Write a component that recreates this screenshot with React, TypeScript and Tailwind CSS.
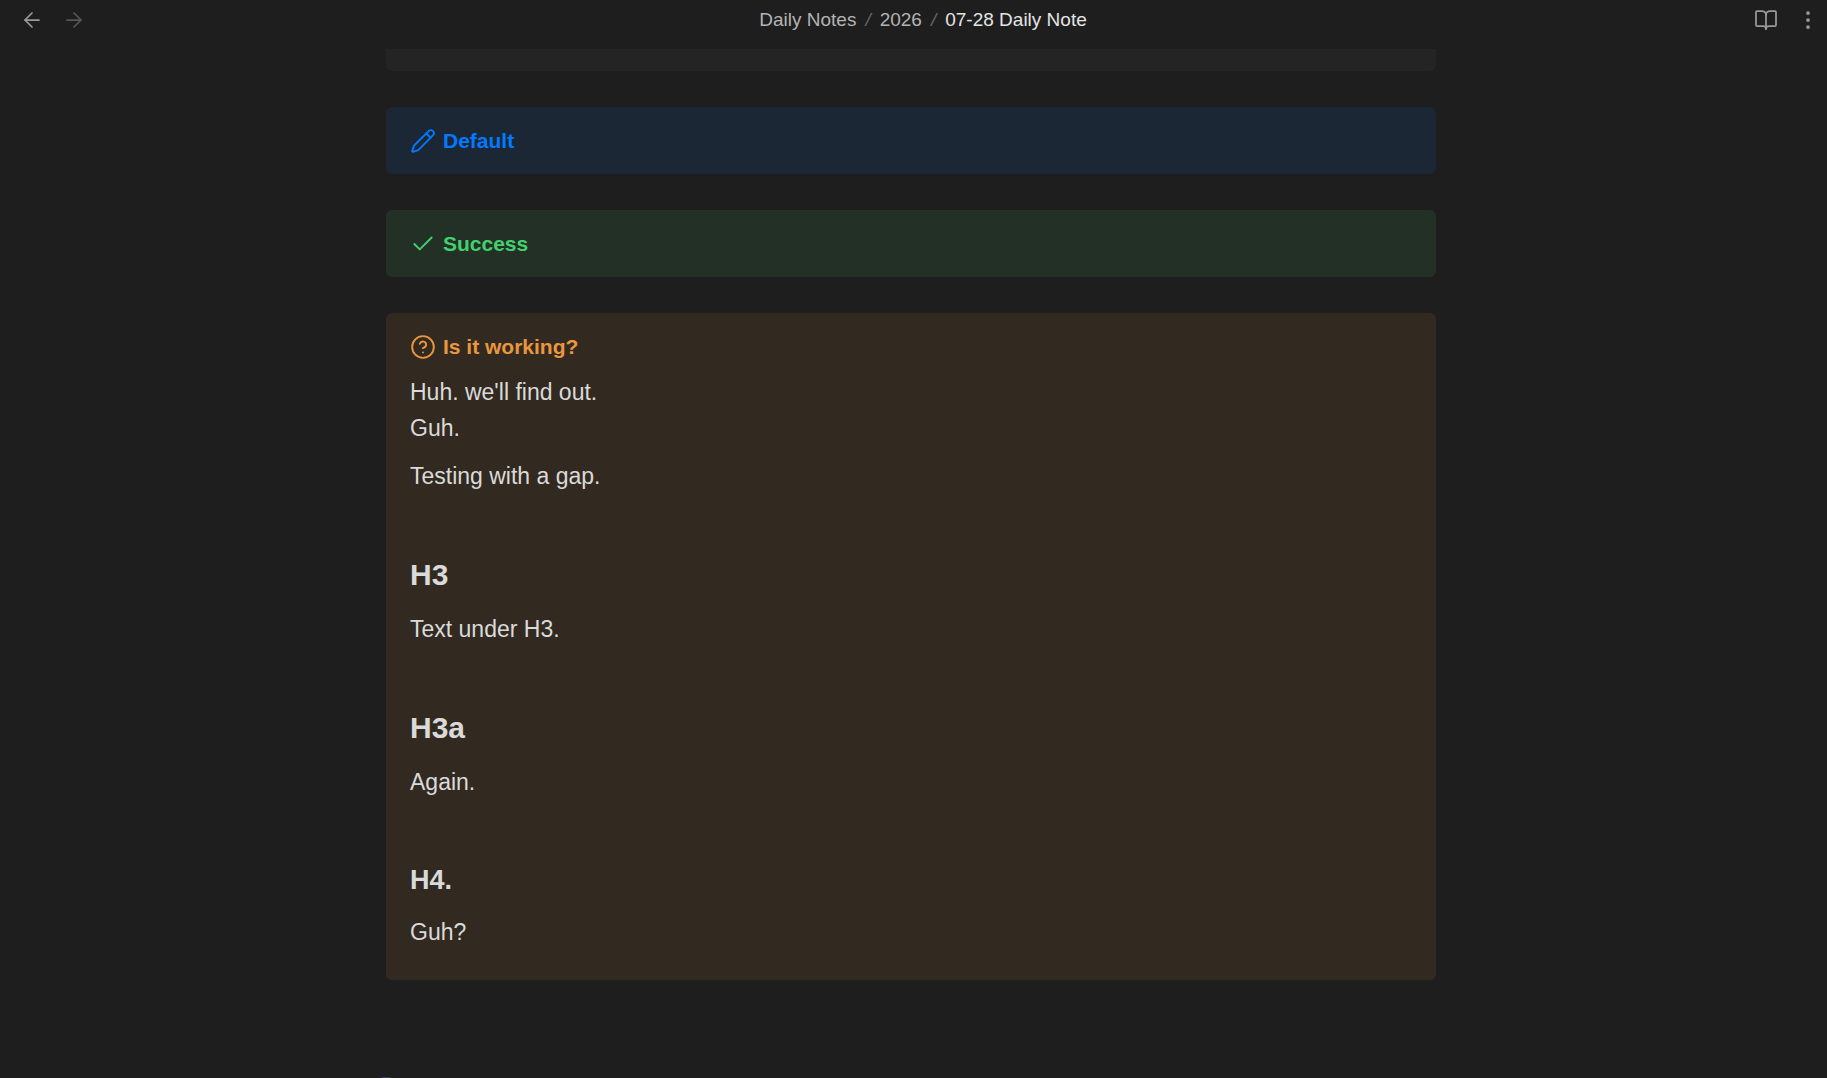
import { ArrowLeft, ArrowRight, BookOpen, Check, CircleHelp, EllipsisVertical, Pencil } from "lucide-react";
import type { ReactNode } from "react";

interface ICallout {
  title: string,
  icon: ReactNode,
  className: string,
  children?: ReactNode
};

function Callout({ title, icon, className, children }: ICallout) {
  return (
    <section className={`rounded-md px-6 pt-4 ${className}`}>
      <div className="flex items-center gap-[7px]">
        {icon}
        <h2 className="text-[21px] leading-9 font-bold">{title}</h2>
      </div>
      {children}
    </section>
  );
}

function NavButton({ label, disabled, children }: { label: string, disabled?: boolean, children: ReactNode }) {
  return (
    <button
      type="button"
      aria-label={label}
      disabled={disabled}
      className="flex h-10 w-9 items-center justify-center text-[#999999] disabled:text-[#565656]"
    >
      {children}
    </button>
  );
}

const crumbs = ["Daily Notes", "2026"];

export default function App() {
  return (
    <div className="flex h-screen flex-col overflow-hidden bg-[#1e1e1e] font-['Liberation_Sans',sans-serif] text-[#dadada]">
      <header className="flex shrink-0 items-center pr-px pb-[9px] pl-[14px]">
        <div className="flex gap-[6px]">
          <NavButton label="Back"><ArrowLeft size={24} strokeWidth={1.75} /></NavButton>
          <NavButton label="Forward" disabled><ArrowRight size={24} strokeWidth={1.75} /></NavButton>
        </div>
        <nav className="flex flex-1 items-center justify-center pl-[6px] text-[19px] leading-10 text-[#b3b3b3]">
          {crumbs.map((c) => (
            <div key={c} className="flex">
              <a href="#">{c}</a>
              <span className="px-[9px] text-[#666666] italic">/</span>
            </div>
          ))}
          <span className="text-[#e4e4e4]">07-28 Daily Note</span>
        </nav>
        <div className="flex gap-[6px]">
          <NavButton label="Reading view"><BookOpen size={24} strokeWidth={1.75} /></NavButton>
          <NavButton label="More options"><EllipsisVertical size={24} strokeWidth={1.75} /></NavButton>
        </div>
      </header>

      <main className="min-h-0 flex-1 overflow-hidden pr-[5px]">
        <div className="mx-auto flex max-w-[1050px] flex-col gap-9">
          {/* tail of the block that is scrolled out of view */}
          <div className="h-[22px] rounded-b-md bg-[#242424]" />

          <Callout title="Default" icon={<Pencil size={26} strokeWidth={1.75} />} className="bg-[#1b2734] pb-[15px] text-[#027aff]" />
          <Callout title="Success" icon={<Check size={26} strokeWidth={1.75} />} className="bg-[#223026] pb-[15px] text-[#44cf6e]" />

          <Callout title="Is it working?" icon={<CircleHelp size={26} strokeWidth={1.75} />} className="bg-[#322a21] pb-[30px] text-[#e9973f]">
            <div className="mt-[9px] text-[23px] leading-9 text-[#dadada]">
              <p>Huh. we'll find out.<br />Guh.</p>
              <p className="mt-3">Testing with a gap.</p>
              <h3 className="mt-[61px] mb-4 text-3xl leading-10 font-bold">H3</h3>
              <p>Text under H3.</p>
              <h3 className="mt-[61px] mb-4 text-3xl leading-10 font-bold">H3a</h3>
              <p>Again.</p>
              <h4 className="mt-[61px] mb-[15px] text-[27px] leading-[38px] font-bold">H4.</h4>
              <p>Guh?</p>
            </div>
          </Callout>

          {/* top edge of the next block */}
          <div className="mt-[61px] -ml-[5px] h-4 w-[10px] shrink-0 rounded-t-xs bg-[#3b3d5c]" />
        </div>
      </main>
    </div>
  );
}
